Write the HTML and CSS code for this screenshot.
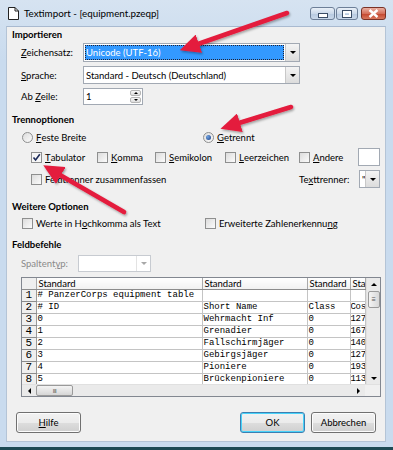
FILE: index.html
```html
<!doctype html>
<html>
    <head>
        <title>Textimport</title>
        <link rel="stylesheet" href="styles.css">
    </head>
    <body>
        <div class="window">
            <div class="titlebar">
                <svg class="app-icon" width="11" height="13" viewBox="0 0 11 13">
                    <path d="M0.5 0.5 H7 L10.5 4 V12.5 H0.5 Z" fill="#fff" stroke="#222"/>
                    <path d="M7 0.5 V4 H10.5" fill="none" stroke="#222"/>
                </svg>
                <span class="title">Textimport - [equipment.pzeqp]</span>
                <div class="caption-buttons">
                    <span class="cap-btn"><span class="cap-min"></span></span>
                    <span class="cap-btn"><span class="cap-max"></span></span>
                    <span class="cap-btn cap-close">
                        <svg width="11" height="9" viewBox="0 0 11 9"><path d="M1.5 1 L9.5 8 M9.5 1 L1.5 8" stroke="#fff" stroke-width="2.4"/></svg>
                    </span>
                </div>
            </div>

            <div class="client">
                <h2 class="group-title first">Importieren</h2>
                <div class="field-row row-charset">
                    <label class="field-label"><u>Z</u>eichensatz:</label>
                    <div class="combo combo-wide">
                        <div class="combo-text selected"><span>Unicode (UTF-16)</span></div>
                        <div class="combo-btn"><span class="tri"></span></div>
                    </div>
                </div>
                <div class="field-row row-lang">
                    <label class="field-label"><u>S</u>prache:</label>
                    <div class="combo combo-wide">
                        <div class="combo-text">Standard - Deutsch (Deutschland)</div>
                        <div class="combo-btn"><span class="tri"></span></div>
                    </div>
                </div>
                <div class="field-row row-line">
                    <label class="field-label">Ab <u>Z</u>eile:</label>
                    <div class="spin">
                        <div class="spin-text">1</div>
                        <div class="spin-btns">
                            <span class="spin-btn"><span class="tri up"></span></span>
                            <span class="spin-btn"><span class="tri"></span></span>
                        </div>
                    </div>
                </div>

                <h2 class="group-title">Trennoptionen</h2>
                <div class="option-row radios">
                    <span class="opt opt-fixed"><span class="radio"></span><u>F</u>este Breite</span>
                    <span class="opt"><span class="radio on"></span><u>G</u>etrennt</span>
                </div>
                <div class="option-row seps">
                    <span class="opt w-tab"><span class="check on"><svg width="9" height="9" viewBox="0 0 9 9"><path d="M1.5 4.5 L3.6 7 L7.8 1.2" fill="none" stroke="#1c2b5a" stroke-width="1.6"/></svg></span><u>T</u>abulator</span>
                    <span class="opt w-comma"><span class="check"></span><u>K</u>omma</span>
                    <span class="opt w-semi"><span class="check"></span><u>S</u>emikolon</span>
                    <span class="opt w-space"><span class="check"></span><u>L</u>eerzeichen</span>
                    <span class="opt w-other"><span class="check"></span><u>A</u>ndere</span>
                    <span class="textbox small"></span>
                </div>
                <div class="option-row merge">
                    <span class="opt w-merge"><span class="check"></span>Feldtrenner zusammenfassen</span>
                    <span class="opt-label">Te<u>x</u>ttrenner:</span>
                    <div class="combo combo-tiny">
                        <div class="combo-text">"</div>
                        <div class="combo-btn"><span class="tri"></span></div>
                    </div>
                </div>

                <h2 class="group-title spaced">Weitere Optionen</h2>
                <div class="option-row more">
                    <span class="opt w-quote"><span class="check"></span>Werte in H<u>o</u>chkomma als Text</span>
                    <span class="opt"><span class="check"></span>Erweiterte Zahlenerkennu<u>n</u>g</span>
                </div>

                <h2 class="group-title">Feldbefehle</h2>
                <div class="field-row row-coltype">
                    <label class="field-label disabled">Spaltent<u>y</u>p:</label>
                    <div class="combo combo-disabled">
                        <div class="combo-text"></div>
                        <div class="combo-btn"><span class="tri"></span></div>
                    </div>
                </div>

                <div class="grid">
                    <div class="grid-main">
                        <table class="data">
                            <colgroup>
                                <col class="c-num"><col class="c-1"><col class="c-2"><col class="c-3"><col class="c-4">
                            </colgroup>
                            <thead>
                                <tr><th></th><th>Standard</th><th>Standard</th><th>Standard</th><th>Standard</th></tr>
                            </thead>
                            <tbody>
                                <tr><td class="num">1</td><td>#&nbsp;PanzerCorps equipment table</td><td></td><td></td><td></td></tr>
                                <tr><td class="num">2</td><td>#&nbsp;ID</td><td>Short Name</td><td>Class</td><td>Cost</td></tr>
                                <tr><td class="num">3</td><td>0</td><td>Wehrmacht Inf</td><td>0</td><td>127</td></tr>
                                <tr><td class="num">4</td><td>1</td><td>Grenadier</td><td>0</td><td>167</td></tr>
                                <tr><td class="num">5</td><td>2</td><td>Fallschirmjäger</td><td>0</td><td>140</td></tr>
                                <tr><td class="num">6</td><td>3</td><td>Gebirgsjäger</td><td>0</td><td>127</td></tr>
                                <tr><td class="num">7</td><td>4</td><td>Pioniere</td><td>0</td><td>193</td></tr>
                                <tr><td class="num">8</td><td>5</td><td>Brückenpioniere</td><td>0</td><td>113</td></tr>
                            </tbody>
                        </table>
                        <div class="vscroll">
                            <span class="sb-arrow"><span class="tri up"></span></span>
                            <span class="vthumb">&#8801;</span>
                            <span class="vtrack"></span>
                            <span class="sb-arrow"><span class="tri"></span></span>
                        </div>
                    </div>
                    <div class="hscroll">
                        <span class="sb-arrow"><span class="tri left"></span></span>
                        <span class="hthumb">III</span>
                        <span class="htrack"></span>
                        <span class="sb-arrow"><span class="tri right"></span></span>
                        <span class="corner"></span>
                    </div>
                </div>

                <div class="button-row">
                    <button class="btn"><u>H</u>ilfe</button>
                    <span class="spacer"></span>
                    <button class="btn default">OK</button>
                    <button class="btn">Abbrechen</button>
                </div>
            </div>

            <svg class="arrows" width="393" height="450" viewBox="0 0 393 450">
                <defs>
                    <marker id="head" markerWidth="4.4" markerHeight="4.2" refX="0.2" refY="2.1" orient="auto" markerUnits="strokeWidth">
                        <path d="M0 0 L4.4 2.1 L0 4.2 Z" fill="#e41b3c"/>
                    </marker>
                    <filter id="shade" x="-10%" y="-20%" width="130%" height="150%">
                        <feDropShadow dx="1" dy="1.5" stdDeviation="1" flood-color="#000" flood-opacity="0.35"/>
                    </filter>
                </defs>
                <g filter="url(#shade)" stroke="#e41b3c" stroke-width="4.6" stroke-linecap="round">
                    <line x1="287" y1="13" x2="198" y2="44" marker-end="url(#head)"/>
                    <line x1="291" y1="107" x2="239" y2="123" marker-end="url(#head)"/>
                    <line x1="124" y1="212" x2="60" y2="175" marker-end="url(#head)"/>
                </g>
            </svg>
        </div>
    </body>
</html>
```

FILE: styles.css
```css
:root {
    --frame: #c9dbee;
    --frame-top: #d6e3f1;
    --client-bg: #f0f0f0;
    --border: #a2a9b3;
    --grid-line: #c4c4c4;
    --select-bg: #3399ff;
    --disabled: #8a8a8a;
}

* {
    box-sizing: border-box;
}

body {
    margin: 0;
    font-family: Lato, "Noto Sans", sans-serif;
    font-size: 9.5px;
    color: #000;
}

u {
    text-decoration: underline;
    text-underline-offset: 1px;
}

.window {
    position: relative;
    width: 393px;
    height: 450px;
    padding: 0 7px 5px 6px;
    display: flex;
    flex-direction: column;
    background: linear-gradient(var(--frame-top), var(--frame) 60px);
    border-bottom: 3px solid #1d4a54;
}

/* title bar */

.titlebar {
    height: 26px;
    display: flex;
    align-items: center;
}

.app-icon {
    margin: 0 5px 0 2px;
}

.title {
    font-size: 9.8px;
    color: #000;
}

.caption-buttons {
    margin-left: auto;
    align-self: flex-start;
    margin-top: 7px;
    display: flex;
    gap: 1px;
}

.cap-btn {
    width: 25px;
    height: 13px;
    border: 1px solid #6d7f98;
    border-radius: 3px;
    background: linear-gradient(#e9f0f8, #cbd9ea 50%, #b6c9e0 51%, #c9d8ea);
    display: flex;
    align-items: center;
    justify-content: center;
}

.cap-btn:nth-child(2) {
    width: 22px;
}

.cap-close {
    width: 25px;
    margin-left: 2px;
    border-color: #7a3226;
    background: linear-gradient(#eab0a3, #d5705b 50%, #c2442c 51%, #d8775e);
}

.cap-min {
    width: 8px;
    height: 3px;
    margin-top: 4px;
    background: #fff;
    outline: 1px solid #3b4d66;
}

.cap-max {
    width: 8px;
    height: 6px;
    border: 2px solid #fff;
    outline: 1px solid #3b4d66;
}

/* client area */

.client {
    flex: 1;
    background: var(--client-bg);
    border: 1px solid #b4c4d6;
    border-top-color: #a9bad0;
    padding: 0 0 0 5px;
    display: flex;
    flex-direction: column;
}

.group-title {
    margin: 8px 0 0;
    height: 14px;
    line-height: 14px;
    font-size: 9.5px;
    font-weight: bold;
}

.group-title.first {
    margin-top: 1px;
}

.group-title.spaced {
    margin-top: 12px;
}

.field-row {
    display: flex;
    align-items: center;
    padding-left: 9px;
}

.field-label {
    width: 62px;
}

.field-label.disabled {
    width: 57px;
    color: var(--disabled);
}

.row-charset {
    margin-top: 1px;
    height: 19px;
}

.row-lang {
    margin-top: 4px;
    height: 18px;
}

.row-line {
    margin-top: 4px;
    height: 17px;
}

.row-coltype {
    margin-top: 3px;
    height: 17px;
}

/* combo boxes */

.combo {
    display: flex;
    height: 100%;
    border: 1px solid var(--border);
    background: #fff;
}

.combo-wide {
    width: 217px;
}

.combo-tiny {
    width: 21px;
}

.combo-disabled {
    width: 73px;
    border-color: #c7cbd1;
}

.combo-text {
    flex: 1;
    display: flex;
    align-items: center;
    padding-left: 2px;
    overflow: hidden;
    white-space: nowrap;
}

.combo-text.selected {
    margin: 1px;
    padding-left: 1px;
    background: var(--select-bg);
    color: #fff;
    outline: 1px dotted #223;
    outline-offset: -1px;
}

.combo-btn {
    width: 14px;
    border-left: 1px solid #c8c8c8;
    background: linear-gradient(#f4f4f4, #dcdcdc);
    display: flex;
    align-items: center;
    justify-content: center;
}

.combo-disabled .combo-btn {
    background: #fff;
    border-left-color: #e3e3e3;
}

.combo-disabled .tri {
    border-top-color: #a8a8a8;
}

.tri {
    width: 0;
    height: 0;
    border-left: 3px solid transparent;
    border-right: 3px solid transparent;
    border-top: 3px solid #000;
}

.tri.up {
    border-top: 0;
    border-bottom: 3px solid #000;
}

.tri.left {
    border: 0;
    border-top: 3px solid transparent;
    border-bottom: 3px solid transparent;
    border-right: 3px solid #000;
}

.tri.right {
    border: 0;
    border-top: 3px solid transparent;
    border-bottom: 3px solid transparent;
    border-left: 3px solid #000;
}

/* spin box */

.spin {
    width: 60px;
    height: 100%;
    display: flex;
    border: 1px solid var(--border);
    background: #fff;
}

.spin-text {
    flex: 1;
    padding-left: 2px;
    display: flex;
    align-items: center;
}

.spin-btns {
    width: 11px;
    margin: 1px 1px 1px 0;
    display: flex;
    flex-direction: column;
    gap: 1px;
}

.spin-btn {
    flex: 1;
    border: 1px solid #b6b6b6;
    border-radius: 2px;
    background: linear-gradient(#f7f7f7, #dedede);
    display: flex;
    align-items: center;
    justify-content: center;
}

.spin-btn .tri {
    border-left-width: 2px;
    border-right-width: 2px;
    border-top-width: 2px;
}

.spin-btn .tri.up {
    border-bottom-width: 2px;
    border-top-width: 0;
}

/* radio and check options */

.option-row {
    display: flex;
    align-items: center;
}

.opt {
    display: flex;
    align-items: center;
    white-space: nowrap;
}

.radio,
.check {
    width: 11px;
    height: 11px;
    margin-right: 3px;
    border: 1px solid #8e8f8f;
    background: linear-gradient(135deg, #dcdcdc, #fbfbfb);
    flex: none;
    display: flex;
    align-items: center;
    justify-content: center;
}

.radio {
    border-radius: 50%;
}

.radio.on::after {
    content: "";
    width: 5px;
    height: 5px;
    border-radius: 50%;
    background: radial-gradient(circle at 35% 35%, #6fa2e0, #1b3f86);
}

.check.on {
    background: #f6f6f6;
}

.radios {
    margin-top: 3px;
    height: 14px;
    padding-left: 10px;
}

.opt-fixed {
    width: 181px;
}

.seps {
    margin-top: 4px;
    height: 18px;
    padding-left: 19px;
}

.w-tab { width: 66px; }
.w-comma { width: 58px; }
.w-semi { width: 70px; }
.w-space { width: 74px; }
.w-other { width: 59px; }

.textbox.small {
    width: 22px;
    height: 18px;
    border: 1px solid var(--border);
    background: #fff;
}

.merge {
    margin-top: 4px;
    height: 18px;
    padding-left: 19px;
}

.w-merge {
    width: 268px;
}

.opt-label {
    width: 60px;
}

.more {
    margin-top: 2px;
    height: 14px;
    padding-left: 10px;
}

.w-quote {
    width: 183px;
}

/* data grid */

.grid {
    margin: 5px 0 0 9px;
    width: 360px;
    height: 120px;
    border: 1px solid #828790;
    background: #fff;
    display: flex;
    flex-direction: column;
}

.grid-main {
    flex: 1;
    display: flex;
    overflow: hidden;
}

.data {
    width: 343px;
    flex: none;
    table-layout: fixed;
    border-collapse: collapse;
    font-family: "Liberation Mono", monospace;
    font-size: 9px;
}

.c-num { width: 14px; }
.c-1 { width: 166px; }
.c-2 { width: 105px; }
.c-3 { width: 43px; }
.c-4 { width: 15px; }

.data th {
    height: 11px;
    padding: 0 0 0 2px;
    font-family: Lato, "Noto Sans", sans-serif;
    font-size: 9.5px;
    font-weight: normal;
    text-align: left;
    white-space: nowrap;
    overflow: hidden;
    text-overflow: clip;
    background: linear-gradient(#ffffff, #f1f1f1);
    border-right: 1px solid #a9a9a9;
    border-bottom: 1px solid #8c8c8c;
}

.data th:first-child {
    background: #efefef;
}

.data td {
    height: 12px;
    padding: 0 0 0 1px;
    line-height: 11px;
    white-space: pre;
    overflow: hidden;
    text-overflow: clip;
    border-right: 1px solid var(--grid-line);
    border-bottom: 1px solid var(--grid-line);
}

.data td:nth-child(5) {
    padding: 0;
    letter-spacing: -0.3px;
}

.data td.num {
    padding: 0;
    text-align: center;
    font-size: 11px;
    background: #efefef;
    border-right: 1px solid #9a9a9a;
    border-bottom: 1px solid #8c8c8c;
}

.vscroll {
    width: 15px;
    flex: none;
    display: flex;
    flex-direction: column;
    background: #eaeaea;
    border-left: 1px solid #e0e0e0;
}

.sb-arrow {
    width: 14px;
    height: 12px;
    display: flex;
    align-items: center;
    justify-content: center;
    flex: none;
}

.vthumb {
    margin: 1px 1px 0;
    height: 17px;
    border: 1px solid #9a9a9a;
    border-radius: 2px;
    background: linear-gradient(90deg, #f4f4f4, #d8d8d8);
    font-size: 8px;
    line-height: 14px;
    text-align: center;
    color: #555;
}

.vtrack,
.htrack {
    flex: 1;
}

.hscroll {
    height: 12px;
    display: flex;
    background: #eaeaea;
    border-top: 1px solid #e0e0e0;
}

.hscroll .sb-arrow {
    width: 14px;
    height: 100%;
}

.hthumb {
    width: 37px;
    border: 1px solid #9a9a9a;
    border-radius: 2px;
    background: linear-gradient(#f4f4f4, #d6d6d6);
    font-size: 6px;
    line-height: 9px;
    text-align: center;
    color: #555;
    letter-spacing: -0.5px;
}

.corner {
    width: 15px;
    background: #f0f0f0;
}

/* buttons */

.button-row {
    margin: 15px 0 0 4px;
    display: flex;
    gap: 6px;
    width: 360px;
}

.spacer {
    flex: 1;
}

.btn {
    width: 65px;
    height: 21px;
    padding: 0;
    font-family: inherit;
    font-size: 9.5px;
    color: #000;
    border: 1px solid #707070;
    border-radius: 3px;
    background: linear-gradient(#f2f2f2, #ebebeb 50%, #dddddd 51%, #cfcfcf);
    box-shadow: inset 0 0 0 1px #fcfcfc;
}

.btn.default {
    border-color: #3c7fb1;
    box-shadow: inset 0 0 0 1px #48d3fa;
}

/* annotation arrows */

.arrows {
    position: absolute;
    top: 0;
    left: 0;
    pointer-events: none;
}
```
